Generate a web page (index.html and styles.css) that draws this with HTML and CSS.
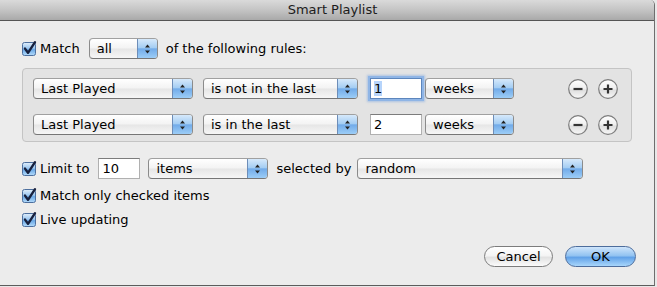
FILE: index.html
```html
<!DOCTYPE html>
<html>
<head>
<meta charset="utf-8">
<link rel="stylesheet" href="styles.css">
</head>
<body>
<svg class="defs" width="0" height="0">
  <defs>
    <linearGradient id="gCheck" x1="0" y1="0" x2="0" y2="1">
      <stop offset="0" stop-color="#e2effb"/>
      <stop offset="0.45" stop-color="#9ac6f0"/>
      <stop offset="0.55" stop-color="#6aa8e6"/>
      <stop offset="1" stop-color="#b5dcfb"/>
    </linearGradient>
    <linearGradient id="gRound" x1="0" y1="0" x2="0" y2="1">
      <stop offset="0" stop-color="#ffffff"/>
      <stop offset="0.5" stop-color="#eeeeee"/>
      <stop offset="0.55" stop-color="#dedede"/>
      <stop offset="1" stop-color="#f8f8f8"/>
    </linearGradient>
  </defs>
</svg>
<div class="window">
  <div class="titlebar"><span class="title">Smart Playlist</span></div>
  <div class="content">
    <div class="row match-row">
      <span class="check"><svg width="14" height="14" viewBox="0 0 14 14"><rect x="0.5" y="0.5" width="13" height="13" rx="2" fill="url(#gCheck)" stroke="#4d6f9e"/><path d="M3 6.6 L6 10.8 L13 0.2" fill="none" stroke="#17203d" stroke-width="2.4" stroke-linecap="round" stroke-linejoin="round"/></svg></span>
      <span class="lbl">Match</span>
      <div class="popup w-all"><span class="ptext">all</span><span class="arrows"><svg width="5" height="10" viewBox="0 0 5 10"><polygon points="0,3.5 2.5,0.5 5,3.5" fill="#222"/><polygon points="0,6.5 2.5,9.5 5,6.5" fill="#222"/></svg></span></div>
      <span class="txt after-all">of the following rules:</span>
    </div>

    <div class="rules">
      <div class="rule">
        <div class="popup w-field"><span class="ptext">Last Played</span><span class="arrows"><svg width="5" height="10" viewBox="0 0 5 10"><polygon points="0,3.5 2.5,0.5 5,3.5" fill="#222"/><polygon points="0,6.5 2.5,9.5 5,6.5" fill="#222"/></svg></span></div>
        <div class="popup w-op"><span class="ptext">is not in the last</span><span class="arrows"><svg width="5" height="10" viewBox="0 0 5 10"><polygon points="0,3.5 2.5,0.5 5,3.5" fill="#222"/><polygon points="0,6.5 2.5,9.5 5,6.5" fill="#222"/></svg></span></div>
        <div class="field w-num focused"><span class="sel">1</span></div>
        <div class="popup w-unit"><span class="ptext">weeks</span><span class="arrows"><svg width="5" height="10" viewBox="0 0 5 10"><polygon points="0,3.5 2.5,0.5 5,3.5" fill="#222"/><polygon points="0,6.5 2.5,9.5 5,6.5" fill="#222"/></svg></span></div>
        <span class="round minus"><svg width="20" height="20" viewBox="0 0 20 20"><circle cx="10" cy="10" r="9.3" fill="url(#gRound)" stroke="#7d7d7d" stroke-width="1.2"/><path d="M5.5 10 H14.5" stroke="#333" stroke-width="2.2"/></svg></span>
        <span class="round plus"><svg width="20" height="20" viewBox="0 0 20 20"><circle cx="10" cy="10" r="9.3" fill="url(#gRound)" stroke="#7d7d7d" stroke-width="1.2"/><path d="M5.5 10 H14.5 M10 5.5 V14.5" stroke="#333" stroke-width="2.2"/></svg></span>
      </div>
      <div class="rule">
        <div class="popup w-field"><span class="ptext">Last Played</span><span class="arrows"><svg width="5" height="10" viewBox="0 0 5 10"><polygon points="0,3.5 2.5,0.5 5,3.5" fill="#222"/><polygon points="0,6.5 2.5,9.5 5,6.5" fill="#222"/></svg></span></div>
        <div class="popup w-op"><span class="ptext">is in the last</span><span class="arrows"><svg width="5" height="10" viewBox="0 0 5 10"><polygon points="0,3.5 2.5,0.5 5,3.5" fill="#222"/><polygon points="0,6.5 2.5,9.5 5,6.5" fill="#222"/></svg></span></div>
        <div class="field w-num">2</div>
        <div class="popup w-unit"><span class="ptext">weeks</span><span class="arrows"><svg width="5" height="10" viewBox="0 0 5 10"><polygon points="0,3.5 2.5,0.5 5,3.5" fill="#222"/><polygon points="0,6.5 2.5,9.5 5,6.5" fill="#222"/></svg></span></div>
        <span class="round minus"><svg width="20" height="20" viewBox="0 0 20 20"><circle cx="10" cy="10" r="9.3" fill="url(#gRound)" stroke="#7d7d7d" stroke-width="1.2"/><path d="M5.5 10 H14.5" stroke="#333" stroke-width="2.2"/></svg></span>
        <span class="round plus"><svg width="20" height="20" viewBox="0 0 20 20"><circle cx="10" cy="10" r="9.3" fill="url(#gRound)" stroke="#7d7d7d" stroke-width="1.2"/><path d="M5.5 10 H14.5 M10 5.5 V14.5" stroke="#333" stroke-width="2.2"/></svg></span>
      </div>
    </div>

    <div class="row limit-row">
      <span class="check"><svg width="14" height="14" viewBox="0 0 14 14"><rect x="0.5" y="0.5" width="13" height="13" rx="2" fill="url(#gCheck)" stroke="#4d6f9e"/><path d="M3 6.6 L6 10.8 L13 0.2" fill="none" stroke="#17203d" stroke-width="2.4" stroke-linecap="round" stroke-linejoin="round"/></svg></span>
      <span class="lbl">Limit to</span>
      <div class="field w-limit">10</div>
      <div class="popup w-items"><span class="ptext">items</span><span class="arrows"><svg width="5" height="10" viewBox="0 0 5 10"><polygon points="0,3.5 2.5,0.5 5,3.5" fill="#222"/><polygon points="0,6.5 2.5,9.5 5,6.5" fill="#222"/></svg></span></div>
      <span class="txt sel-by">selected by</span>
      <div class="popup w-random"><span class="ptext">random</span><span class="arrows"><svg width="5" height="10" viewBox="0 0 5 10"><polygon points="0,3.5 2.5,0.5 5,3.5" fill="#222"/><polygon points="0,6.5 2.5,9.5 5,6.5" fill="#222"/></svg></span></div>
    </div>

    <div class="row check-row first">
      <span class="check"><svg width="14" height="14" viewBox="0 0 14 14"><rect x="0.5" y="0.5" width="13" height="13" rx="2" fill="url(#gCheck)" stroke="#4d6f9e"/><path d="M3 6.6 L6 10.8 L13 0.2" fill="none" stroke="#17203d" stroke-width="2.4" stroke-linecap="round" stroke-linejoin="round"/></svg></span>
      <span class="lbl">Match only checked items</span>
    </div>
    <div class="row check-row second">
      <span class="check"><svg width="14" height="14" viewBox="0 0 14 14"><rect x="0.5" y="0.5" width="13" height="13" rx="2" fill="url(#gCheck)" stroke="#4d6f9e"/><path d="M3 6.6 L6 10.8 L13 0.2" fill="none" stroke="#17203d" stroke-width="2.4" stroke-linecap="round" stroke-linejoin="round"/></svg></span>
      <span class="lbl">Live updating</span>
    </div>

    <div class="buttons">
      <div class="btn cancel">Cancel</div>
      <div class="btn ok">OK</div>
    </div>
  </div>
</div>
</body>
</html>
```

FILE: styles.css
```css
* { box-sizing: border-box; }

body {
  margin: 0;
  background: #e8e8e8;
  font-family: "DejaVu Sans", "Liberation Sans", sans-serif;
  font-size: 13px;
  color: #000;
}

.defs { position: absolute; width: 0; height: 0; }

.window {
  width: 655px;
  height: 286px;
  background: #ececec;
  border-right: 1px solid #6e6e6e;
  border-bottom: 1px solid #5c5c5c;
  border-top-right-radius: 5px;
  display: flex;
  flex-direction: column;
}

.titlebar {
  height: 21px;
  border-bottom: 1px solid #555;
  border-top-right-radius: 5px;
  background: linear-gradient(#dadada, #c4c4c4 50%, #a9a9a9);
  display: flex;
  align-items: center;
  justify-content: center;
  padding-left: 11px;
}

.title {
  font-size: 13px;
  color: #1c1c1c;
  line-height: 16px;
}

.content {
  padding: 17px 18px 0 22px;
  display: flex;
  flex-direction: column;
}

.row {
  display: flex;
  align-items: center;
  height: 21px;
}

.check {
  width: 14px;
  height: 14px;
  display: flex;
}
.check svg { overflow: visible; }

.lbl { margin-left: 4px; line-height: 16px; }

.txt { line-height: 16px; }

.popup {
  height: 21px;
  display: flex;
  border: 1px solid #8b8b8b;
  border-top-color: #a0a0a0;
  border-bottom-color: #767676;
  border-radius: 4px;
  background: linear-gradient(#ffffff, #f3f3f3 48%, #e6e6e6 52%, #f6f6f6);
  overflow: hidden;
}

.ptext {
  flex: 1;
  padding-left: 7px;
  line-height: 19px;
  white-space: nowrap;
}

.arrows {
  width: 20px;
  display: flex;
  align-items: center;
  justify-content: center;
  border-left: 1px solid #6d8db8;
  background: linear-gradient(#d6e9fb, #a4cdf3 46%, #72abe9 52%, #9ccdf7);
}

.w-all { width: 69px; margin-left: 9px; }
.after-all { margin-left: 8px; }

.rules {
  margin-top: 9px;
  width: 610px;
  border: 1px solid #c4c4c4;
  border-radius: 4px;
  background: #e3e3e3;
  padding: 9px 0 6px 10px;
  display: flex;
  flex-direction: column;
  gap: 15px;
}

.rule {
  display: flex;
  align-items: center;
  height: 21px;
}

.w-field { width: 160px; }
.w-op { width: 155px; margin-left: 10px; }
.w-unit { width: 89px; margin-left: 3px; }

.field {
  height: 21px;
  background: #fff;
  border: 1px solid #b0b0b0;
  border-top-color: #7c7c7c;
  padding-left: 3px;
  line-height: 19px;
}

.w-num { width: 52px; margin-left: 12px; }

.focused {
  border-color: #5d86bd;
  box-shadow: 0 0 0 2px #8fb5e6, 0 0 2px 3px rgba(120, 165, 225, 0.5);
}

.sel { background: #b6d4fb; }

.round {
  width: 20px;
  height: 20px;
  display: flex;
}
.minus { margin-left: 54px; }
.plus { margin-left: 10px; }

.limit-row { margin-top: 16px; }
.w-limit { width: 42px; margin-left: 9px; }
.w-items { width: 120px; margin-left: 8px; }
.sel-by { margin-left: 8px; }
.w-random { width: 226px; margin-left: 6px; }

.check-row { height: 18px; }
.check-row.first { margin-top: 8px; }
.check-row.second { margin-top: 6px; }

.buttons {
  margin-top: 17px;
  display: flex;
  justify-content: flex-end;
  gap: 12px;
}

.btn {
  height: 21px;
  border-radius: 11px;
  display: flex;
  align-items: center;
  justify-content: center;
  line-height: 16px;
}

.cancel {
  width: 69px;
  border: 1px solid #7c7c7c;
  background: linear-gradient(#ffffff, #f4f4f4 45%, #e2e2e2 55%, #fbfbfb);
}

.ok {
  width: 71px;
  border: 1px solid #4d6d9c;
  background: linear-gradient(#cfe5fb, #93c3f1 45%, #62a2e8 55%, #a8d6fb);
}
```
